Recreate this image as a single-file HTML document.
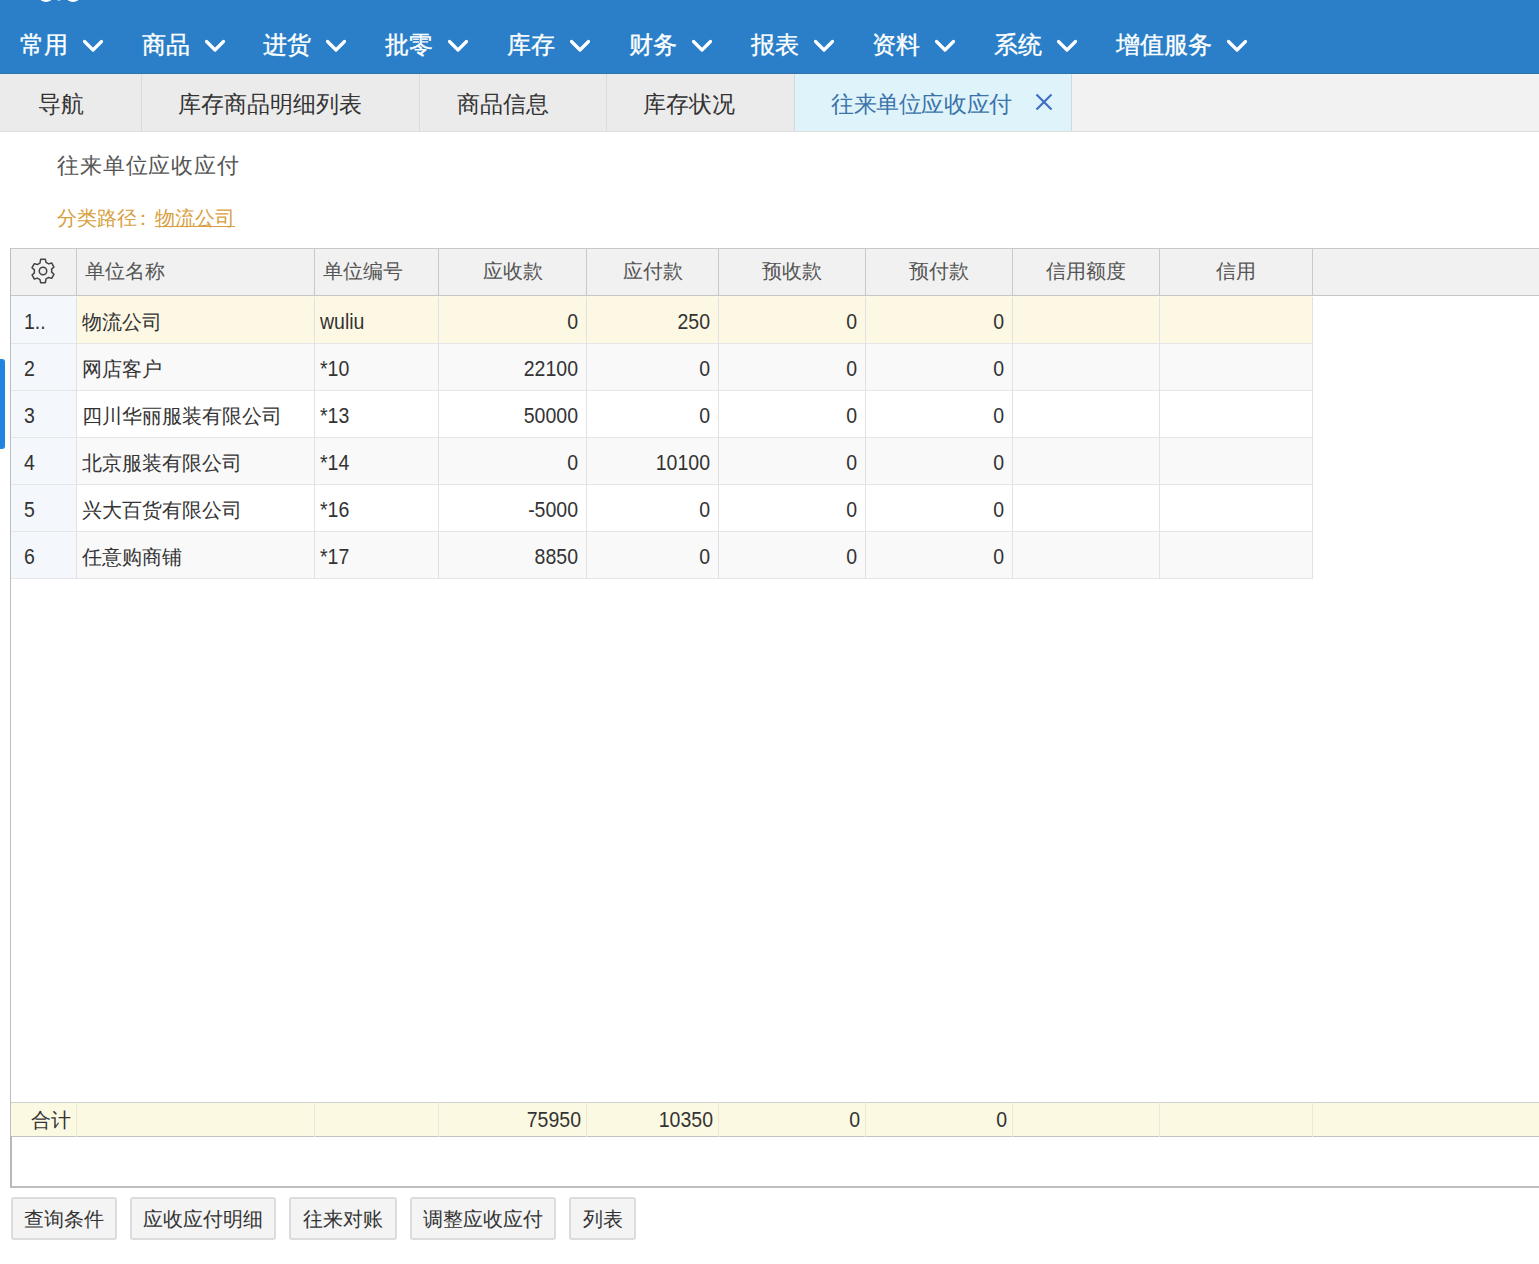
<!DOCTYPE html>
<html><head><meta charset="utf-8">
<style>
*{box-sizing:border-box;margin:0;padding:0}
html,body{width:1539px;height:1264px;overflow:hidden;background:#fff;font-family:"Liberation Sans",sans-serif;color:#333}
#top{position:absolute;left:0;top:0;width:1539px;height:74px;background:#2a7fc8;border-bottom:1px solid #2f73ad}
.logo{position:absolute;left:39px;top:-10px;width:14px;height:12px;border-radius:50%;background:#fff}
.logo2{position:absolute;left:66px;top:-10px;width:14px;height:12px;border-radius:50%;background:#fff}
.logo3{position:absolute;left:57px;top:-3px;width:4px;height:4px;border-radius:50%;background:#8fd0ff}
.mi{position:absolute;top:28px;height:34px;font-size:24px;line-height:34px;color:#fff;white-space:nowrap;-webkit-text-stroke:0.35px #fff}
.chev{position:absolute;top:39px}
#tabs{position:absolute;left:0;top:74px;width:1539px;height:58px;background:#f2f2f2;border-bottom:1px solid #dedede}
.tab{position:absolute;top:0;height:57px;background:#ebebeb;border-right:1px solid #dadada;font-size:22.5px;line-height:61px;color:#333;white-space:nowrap}
.tab span{position:absolute;top:0}
.tab.act{background:#dff3fb;border-left:1px solid #d2d8dc;border-right-color:#d2d8dc;color:#3b74aa;letter-spacing:-0.4px}
.tab .x{position:absolute}
#title{position:absolute;left:57px;top:149px;font-size:22px;letter-spacing:0.85px;line-height:34px;color:#555;white-space:nowrap}
#path{position:absolute;left:57px;top:203px;font-size:19.5px;line-height:30px;color:#d89f42;white-space:nowrap}
#path .colon{display:inline-block;width:18px;text-indent:-4px}
#path u{text-decoration:underline}
#lbar{position:absolute;left:0;top:359px;width:5px;height:90px;background:#2284e0;border-radius:0 3px 3px 0}
#grid{position:absolute;left:0;top:0;width:1539px;height:1264px}
.hdr{position:absolute;left:10px;width:1529px;background:#f1f1f1;border-top:1px solid #c8c8c8;border-bottom:1px solid #c6c6c6}
.hc{position:absolute;font-size:19.5px;line-height:46px;color:#555;white-space:nowrap}
.vl{position:absolute;width:1px;background:#e2e2e2}
.hvl{background:#c9c9c9}
.row{position:absolute;left:10px}
.c0{position:absolute;left:10px;width:66px;background:#f4f8fc}
.hl{position:absolute;left:10px;height:1px;background:#e6e6e6}
.cell{position:absolute;font-size:19.5px;color:#333;white-space:nowrap}
.cell.r{text-align:right}
.foot{position:absolute;left:10px;width:1529px;background:#fcf9e3;border-top:1px solid #cfcfcf;border-bottom:1px solid #c2c2c2}
.fvl{background:#ebe8d8}
#gleft{position:absolute;left:10px;top:248px;width:1px;height:940px;background:#bdbdbd}
#gleft2{position:absolute;left:10px;top:1136px;width:2px;height:52px;background:#b8b8b8}
#gbot{position:absolute;left:10px;top:1186px;width:1529px;height:2px;background:#bdbdbd}
.btn{position:absolute;top:1197px;height:43px;border:2px solid #dcdcdc;border-radius:3px;background:#f4f4f4;font-size:19.5px;line-height:40px;text-align:center;color:#333;white-space:nowrap}
.gear{position:absolute}
.cell.n{transform:scaleY(1.1);transform-origin:50% 50%}

</style></head><body>
<div id="top"><div class="logo"></div><div class="logo2"></div><div class="logo3"></div><div class="mi" style="left:20px">常用</div><svg class="chev" style="left:82px" width="22" height="14" viewBox="0 0 22 14"><polyline points="2.5,2.5 11,11 19.5,2.5" fill="none" stroke="#fff" stroke-width="3.2" stroke-linecap="round" stroke-linejoin="round"/></svg><div class="mi" style="left:142px">商品</div><svg class="chev" style="left:204px" width="22" height="14" viewBox="0 0 22 14"><polyline points="2.5,2.5 11,11 19.5,2.5" fill="none" stroke="#fff" stroke-width="3.2" stroke-linecap="round" stroke-linejoin="round"/></svg><div class="mi" style="left:263px">进货</div><svg class="chev" style="left:325px" width="22" height="14" viewBox="0 0 22 14"><polyline points="2.5,2.5 11,11 19.5,2.5" fill="none" stroke="#fff" stroke-width="3.2" stroke-linecap="round" stroke-linejoin="round"/></svg><div class="mi" style="left:385px">批零</div><svg class="chev" style="left:447px" width="22" height="14" viewBox="0 0 22 14"><polyline points="2.5,2.5 11,11 19.5,2.5" fill="none" stroke="#fff" stroke-width="3.2" stroke-linecap="round" stroke-linejoin="round"/></svg><div class="mi" style="left:507px">库存</div><svg class="chev" style="left:569px" width="22" height="14" viewBox="0 0 22 14"><polyline points="2.5,2.5 11,11 19.5,2.5" fill="none" stroke="#fff" stroke-width="3.2" stroke-linecap="round" stroke-linejoin="round"/></svg><div class="mi" style="left:629px">财务</div><svg class="chev" style="left:691px" width="22" height="14" viewBox="0 0 22 14"><polyline points="2.5,2.5 11,11 19.5,2.5" fill="none" stroke="#fff" stroke-width="3.2" stroke-linecap="round" stroke-linejoin="round"/></svg><div class="mi" style="left:751px">报表</div><svg class="chev" style="left:813px" width="22" height="14" viewBox="0 0 22 14"><polyline points="2.5,2.5 11,11 19.5,2.5" fill="none" stroke="#fff" stroke-width="3.2" stroke-linecap="round" stroke-linejoin="round"/></svg><div class="mi" style="left:872px">资料</div><svg class="chev" style="left:934px" width="22" height="14" viewBox="0 0 22 14"><polyline points="2.5,2.5 11,11 19.5,2.5" fill="none" stroke="#fff" stroke-width="3.2" stroke-linecap="round" stroke-linejoin="round"/></svg><div class="mi" style="left:994px">系统</div><svg class="chev" style="left:1056px" width="22" height="14" viewBox="0 0 22 14"><polyline points="2.5,2.5 11,11 19.5,2.5" fill="none" stroke="#fff" stroke-width="3.2" stroke-linecap="round" stroke-linejoin="round"/></svg><div class="mi" style="left:1116px">增值服务</div><svg class="chev" style="left:1226px" width="22" height="14" viewBox="0 0 22 14"><polyline points="2.5,2.5 11,11 19.5,2.5" fill="none" stroke="#fff" stroke-width="3.2" stroke-linecap="round" stroke-linejoin="round"/></svg></div>
<div id="tabs"><div class="tab" style="left:0px;width:142px"><span style="left:38px">导航</span></div><div class="tab" style="left:142px;width:278px"><span style="left:36px">库存商品明细列表</span></div><div class="tab" style="left:420px;width:187px"><span style="left:37px">商品信息</span></div><div class="tab" style="left:607px;width:188px"><span style="left:36px">库存状况</span></div><div class="tab act" style="left:794px;width:278px"><span style="left:36px">往来单位应收应付</span><svg class="x" style="left:240px;top:19px" width="18" height="18" viewBox="0 0 18 18"><path d="M1.5 1.5L16.5 16.5M16.5 1.5L1.5 16.5" stroke="#3f6fc6" stroke-width="2.2" fill="none"/></svg></div></div>
<div id="title">往来单位应收应付</div>
<div id="path">分类路径<span class="colon">：</span><u>物流公司</u></div>
<div id="lbar"></div>
<div id="grid"><div class="hdr" style="top:248px;height:48px"></div><svg class="gear" style="left:29px;top:257px" width="28" height="28" viewBox="0 0 24 24"><path fill="none" stroke="#444" stroke-width="1.3" stroke-linejoin="round" d="M10 2h4l.6 2.6 2.3 1.3 2.5-.8 2 3.5-2 1.8v2.6l2 1.8-2 3.5-2.5-.8-2.3 1.3L14 22h-4l-.6-2.6-2.3-1.3-2.5.8-2-3.5 2-1.8v-2.6l-2-1.8 2-3.5 2.5.8 2.3-1.3z"/><circle cx="12" cy="12" r="3.2" fill="none" stroke="#444" stroke-width="1.3"/></svg><div class="hc" style="left:77px;width:237px;top:248px;height:48px;padding-left:8px;text-align:left">单位名称</div><div class="hc" style="left:315px;width:123px;top:248px;height:48px;padding-left:8px;text-align:left">单位编号</div><div class="hc" style="left:439px;width:147px;top:248px;height:48px;text-align:center">应收款</div><div class="hc" style="left:587px;width:131px;top:248px;height:48px;text-align:center">应付款</div><div class="hc" style="left:719px;width:146px;top:248px;height:48px;text-align:center">预收款</div><div class="hc" style="left:866px;width:146px;top:248px;height:48px;text-align:center">预付款</div><div class="hc" style="left:1013px;width:146px;top:248px;height:48px;text-align:center">信用额度</div><div class="hc" style="left:1160px;width:152px;top:248px;height:48px;text-align:center">信用</div><div class="vl hvl" style="left:76px;top:248px;height:48px"></div><div class="vl hvl" style="left:314px;top:248px;height:48px"></div><div class="vl hvl" style="left:438px;top:248px;height:48px"></div><div class="vl hvl" style="left:586px;top:248px;height:48px"></div><div class="vl hvl" style="left:718px;top:248px;height:48px"></div><div class="vl hvl" style="left:865px;top:248px;height:48px"></div><div class="vl hvl" style="left:1012px;top:248px;height:48px"></div><div class="vl hvl" style="left:1159px;top:248px;height:48px"></div><div class="vl hvl" style="left:1312px;top:248px;height:48px"></div><div class="row" style="top:296px;height:48px;width:1302px;background:#fdf8e4"></div><div class="c0" style="top:296px;height:48px"></div><div class="cell n" style="left:24px;top:298px;height:47px;line-height:47px">1..</div><div class="cell" style="left:82px;top:299px;height:47px;line-height:47px">物流公司</div><div class="cell n" style="left:320px;top:298px;height:47px;line-height:47px">wuliu</div><div class="cell r n" style="left:438px;width:140px;top:298px;height:47px;line-height:47px">0</div><div class="cell r n" style="left:586px;width:124px;top:298px;height:47px;line-height:47px">250</div><div class="cell r n" style="left:718px;width:139px;top:298px;height:47px;line-height:47px">0</div><div class="cell r n" style="left:865px;width:139px;top:298px;height:47px;line-height:47px">0</div><div class="hl" style="top:343px;width:1302px"></div><div class="row" style="top:344px;height:47px;width:1302px;background:#f9f9f9"></div><div class="c0" style="top:344px;height:47px"></div><div class="cell n" style="left:24px;top:345px;height:47px;line-height:47px">2</div><div class="cell" style="left:82px;top:346px;height:47px;line-height:47px">网店客户</div><div class="cell n" style="left:320px;top:345px;height:47px;line-height:47px">*10</div><div class="cell r n" style="left:438px;width:140px;top:345px;height:47px;line-height:47px">22100</div><div class="cell r n" style="left:586px;width:124px;top:345px;height:47px;line-height:47px">0</div><div class="cell r n" style="left:718px;width:139px;top:345px;height:47px;line-height:47px">0</div><div class="cell r n" style="left:865px;width:139px;top:345px;height:47px;line-height:47px">0</div><div class="hl" style="top:390px;width:1302px"></div><div class="row" style="top:391px;height:47px;width:1302px;background:#fff"></div><div class="c0" style="top:391px;height:47px"></div><div class="cell n" style="left:24px;top:392px;height:47px;line-height:47px">3</div><div class="cell" style="left:82px;top:393px;height:47px;line-height:47px">四川华丽服装有限公司</div><div class="cell n" style="left:320px;top:392px;height:47px;line-height:47px">*13</div><div class="cell r n" style="left:438px;width:140px;top:392px;height:47px;line-height:47px">50000</div><div class="cell r n" style="left:586px;width:124px;top:392px;height:47px;line-height:47px">0</div><div class="cell r n" style="left:718px;width:139px;top:392px;height:47px;line-height:47px">0</div><div class="cell r n" style="left:865px;width:139px;top:392px;height:47px;line-height:47px">0</div><div class="hl" style="top:437px;width:1302px"></div><div class="row" style="top:438px;height:47px;width:1302px;background:#f9f9f9"></div><div class="c0" style="top:438px;height:47px"></div><div class="cell n" style="left:24px;top:439px;height:47px;line-height:47px">4</div><div class="cell" style="left:82px;top:440px;height:47px;line-height:47px">北京服装有限公司</div><div class="cell n" style="left:320px;top:439px;height:47px;line-height:47px">*14</div><div class="cell r n" style="left:438px;width:140px;top:439px;height:47px;line-height:47px">0</div><div class="cell r n" style="left:586px;width:124px;top:439px;height:47px;line-height:47px">10100</div><div class="cell r n" style="left:718px;width:139px;top:439px;height:47px;line-height:47px">0</div><div class="cell r n" style="left:865px;width:139px;top:439px;height:47px;line-height:47px">0</div><div class="hl" style="top:484px;width:1302px"></div><div class="row" style="top:485px;height:47px;width:1302px;background:#fff"></div><div class="c0" style="top:485px;height:47px"></div><div class="cell n" style="left:24px;top:486px;height:47px;line-height:47px">5</div><div class="cell" style="left:82px;top:487px;height:47px;line-height:47px">兴大百货有限公司</div><div class="cell n" style="left:320px;top:486px;height:47px;line-height:47px">*16</div><div class="cell r n" style="left:438px;width:140px;top:486px;height:47px;line-height:47px">-5000</div><div class="cell r n" style="left:586px;width:124px;top:486px;height:47px;line-height:47px">0</div><div class="cell r n" style="left:718px;width:139px;top:486px;height:47px;line-height:47px">0</div><div class="cell r n" style="left:865px;width:139px;top:486px;height:47px;line-height:47px">0</div><div class="hl" style="top:531px;width:1302px"></div><div class="row" style="top:532px;height:47px;width:1302px;background:#f9f9f9"></div><div class="c0" style="top:532px;height:47px"></div><div class="cell n" style="left:24px;top:533px;height:47px;line-height:47px">6</div><div class="cell" style="left:82px;top:534px;height:47px;line-height:47px">任意购商铺</div><div class="cell n" style="left:320px;top:533px;height:47px;line-height:47px">*17</div><div class="cell r n" style="left:438px;width:140px;top:533px;height:47px;line-height:47px">8850</div><div class="cell r n" style="left:586px;width:124px;top:533px;height:47px;line-height:47px">0</div><div class="cell r n" style="left:718px;width:139px;top:533px;height:47px;line-height:47px">0</div><div class="cell r n" style="left:865px;width:139px;top:533px;height:47px;line-height:47px">0</div><div class="hl" style="top:578px;width:1302px"></div><div class="vl" style="left:76px;top:297px;height:282px"></div><div class="vl" style="left:314px;top:297px;height:282px"></div><div class="vl" style="left:438px;top:297px;height:282px"></div><div class="vl" style="left:586px;top:297px;height:282px"></div><div class="vl" style="left:718px;top:297px;height:282px"></div><div class="vl" style="left:865px;top:297px;height:282px"></div><div class="vl" style="left:1012px;top:297px;height:282px"></div><div class="vl" style="left:1159px;top:297px;height:282px"></div><div class="vl" style="left:1312px;top:297px;height:282px"></div><div class="foot" style="top:1102px;height:35px"></div><div class="cell r" style="left:11px;width:60px;top:1103px;height:35px;line-height:35px">合计</div><div class="cell r n" style="left:438px;width:143px;top:1102px;height:35px;line-height:35px">75950</div><div class="cell r n" style="left:586px;width:127px;top:1102px;height:35px;line-height:35px">10350</div><div class="cell r n" style="left:718px;width:142px;top:1102px;height:35px;line-height:35px">0</div><div class="cell r n" style="left:865px;width:142px;top:1102px;height:35px;line-height:35px">0</div><div class="vl fvl" style="left:76px;top:1102px;height:35px"></div><div class="vl fvl" style="left:314px;top:1102px;height:35px"></div><div class="vl fvl" style="left:438px;top:1102px;height:35px"></div><div class="vl fvl" style="left:586px;top:1102px;height:35px"></div><div class="vl fvl" style="left:718px;top:1102px;height:35px"></div><div class="vl fvl" style="left:865px;top:1102px;height:35px"></div><div class="vl fvl" style="left:1012px;top:1102px;height:35px"></div><div class="vl fvl" style="left:1159px;top:1102px;height:35px"></div><div class="vl fvl" style="left:1312px;top:1102px;height:35px"></div><div id="gleft"></div><div id="gleft2"></div><div id="gbot"></div></div>
<div class="btn" style="left:11px;width:106px">查询条件</div><div class="btn" style="left:130px;width:146px">应收应付明细</div><div class="btn" style="left:289px;width:108px">往来对账</div><div class="btn" style="left:410px;width:146px">调整应收应付</div><div class="btn" style="left:569px;width:67px">列表</div></body></html>
